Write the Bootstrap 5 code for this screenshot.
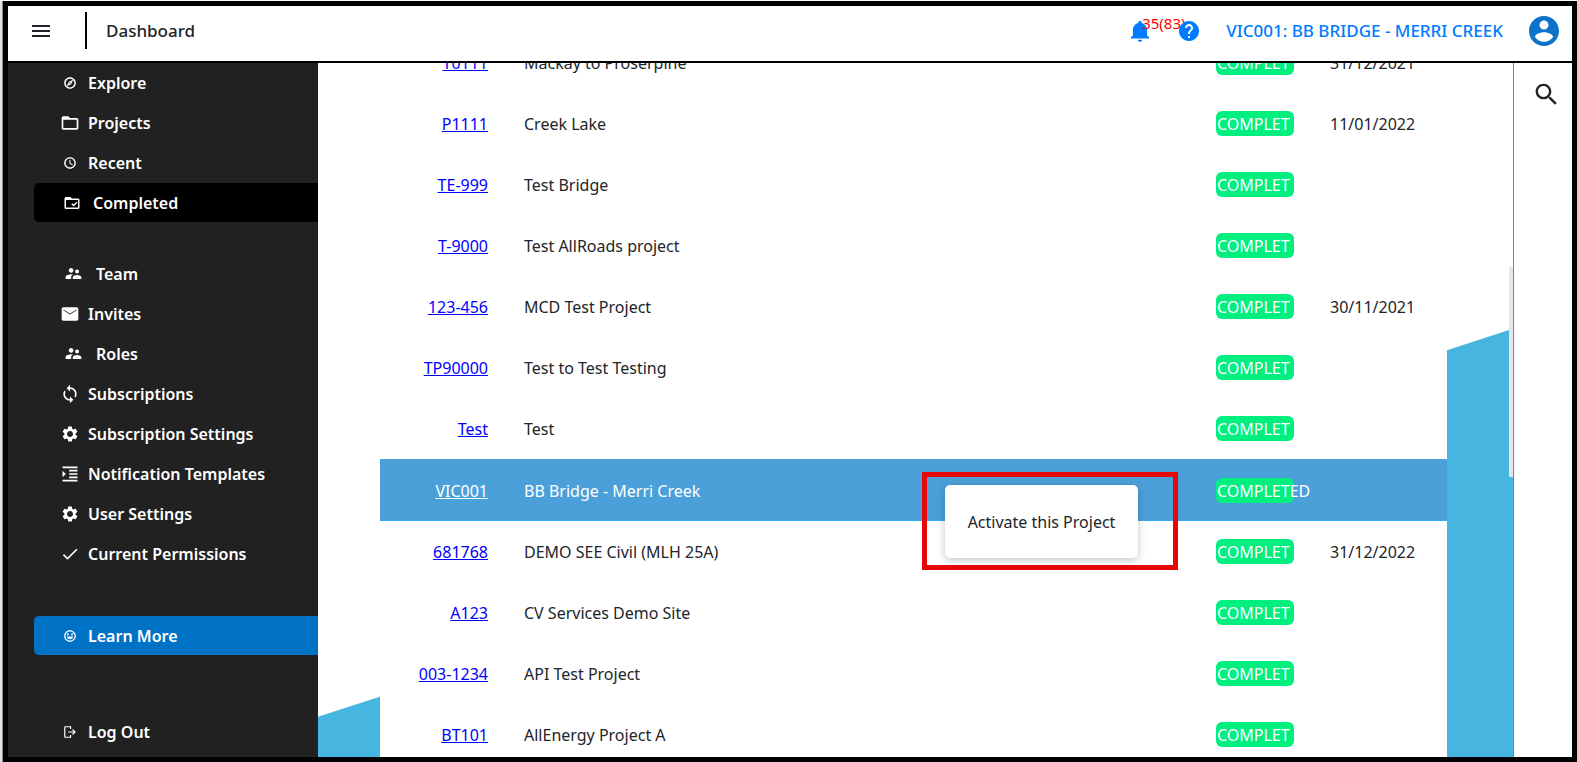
<!DOCTYPE html>
<html lang="en">
<head>
<meta charset="utf-8">
<meta name="viewport" content="width=device-width, initial-scale=1">
<title>Dashboard</title>
<link href="https://cdn.jsdelivr.net/npm/bootstrap@5.3.0/dist/css/bootstrap.min.css" rel="stylesheet">
<style>
  body { font-family: "Noto Sans", "Open Sans", sans-serif; font-size: 16px; line-height: 24px; color: #212529; background: #dfe2e4; }
  svg { fill: currentColor; display: block; flex: none; }
  .window-edge { padding: 1px 0 0 2px; background: linear-gradient(#fff, #fff) top / 100% 1px no-repeat #dfe2e4; }
  .app-frame { border: 5px solid #000; box-shadow: -1px 0 #8a8a8a; margin-left: 1px; background: #fff; min-width: 0; }
  .topbar { height: 57px; border-bottom: 2px solid #000; padding: 0 10px 6px 21px; }
  .plain-btn { border: 0; background: none; padding: 0; color: inherit; }
  .divider { width: 2px; height: 37px; background: #000; margin: 0 19px 0 32px; }
  .page-title { font-size: 17px; font-weight: 500; margin: 0; line-height: 24px; }
  .blue { color: #007bff; }
  .alerts { width: 50px; }
  .alert-count { left: 15px; top: -5px; font-size: 15px; line-height: 20px; color: #f00; }
  .project-name { font-size: 17px; font-weight: 500; margin: 0 23px 0 25px; text-decoration: none; }
  .avatar { color: #0b74c8; }

  .side { width: 310px; background: #212121; padding-left: 26px; }
  .side a { height: 39px; margin-bottom: 1px; padding-left: 26px; color: #fff; font-weight: 600; text-decoration: none; border-radius: 5px 0 0 5px; }
  .side .ico { width: 20px; margin-right: 8px; display: flex; justify-content: center; }
  .side .ico-wide { width: 24px; margin-right: 9px; }
  .side .ico-team { width: 26px; margin-right: 10px; }
  .side .current { background: #000; }
  .side .learn { background: #0072c6; }
  .group-account { margin-top: 32px; }
  .group-learn { margin-top: 43px; }
  .group-exit { margin-top: 57px; }

  .stage { min-width: 0; padding: 0 66px 0 62px; }
  .stage::before { content: ""; position: absolute; inset: 0; background: #46b5df; clip-path: polygon(0 94.2%, 100% 38.3%, 100% 100%, 0 100%); }
  .scroll-thumb { right: 0; top: 204px; width: 4px; height: 210px; background: #e6e6e6; }
  .sheet { background: #fff; margin-top: -31px; }
  .projects { table-layout: fixed; width: 100%; border-collapse: separate; border-spacing: 0; }
  .projects td { height: 61px; padding: 1px 0 0; vertical-align: middle; white-space: nowrap; }
  .projects td:nth-child(3) { padding-top: 0; }
  .col-id { width: 144px; }
  .col-state { width: 114px; }
  .col-due { width: 117px; }
  .projects td:first-child { text-align: right; padding-right: 36px; }
  .projects a { color: #00f; text-decoration: underline; }
  .state { display: block; width: 78px; height: 25px; border-radius: 6px; background: #00ef7f; color: #fff; padding-left: 1px; line-height: 27px; }
  .projects .picked td { background: #4ba0da; color: #fff; height: 62px; border-top: 1px solid #45a5e5; border-bottom: 0; box-shadow: inset 0 -1px #35aaf5; }
  .projects .picked a { color: #fff; }
  .callout-box { right: 38px; top: 12px; width: 256px; height: 98px; border: 5px solid #ea0606; padding: 8px 0 0 18px; z-index: 2; }
  .menu-btn { width: 193px; height: 73px; border: 0; border-radius: 5px; background: #fff; color: #212529; box-shadow: 0 2px 8px rgba(0,0,0,.24); }
  .tools { width: 59px; border-left: 1px solid #808080; padding: 17px 0 0 18px; background: #fff; }
</style>
</head>
<body>
<svg class="d-none">
  <symbol id="gear" viewBox="0 0 24 24"><path fill-rule="evenodd" d="M19.430 12.980c.04-.32.070-.64.070-.98s-.03-.66-.07-.98l2.110-1.650c.19-.15.240-.42.120-.64l-2-3.460c-.12-.22-.39-.3-.61-.22l-2.490 1c-.52-.4-1.080-.73-1.690-.98l-.38-2.650C14.460 2.180 14.250 2 14 2h-4c-.25 0-.46.180-.49.420l-.38 2.650c-.61.250-1.170.59-1.690.98l-2.490-1c-.23-.09-.49 0-.61.220l-2 3.460c-.13.220-.07.490.12.640l2.110 1.650c-.04.320-.07.650-.07.980s.03.660.07.980l-2.110 1.650c-.19.150-.24.420-.12.640l2 3.460c.12.220.39.300.61.220l2.490-1c.52.400 1.080.730 1.690.980l.38 2.650c.03.240.24.420.49.420h4c.25 0 .46-.18.490-.42l.38-2.650c.61-.25 1.170-.59 1.690-.98l2.490 1c.23.090.49 0 .61-.22l2-3.460c.12-.22.070-.49-.12-.64l-2.110-1.650zM12 16c-2.210 0-4-1.790-4-4s1.790-4 4-4 4 1.790 4 4-1.790 4-4 4z"/></symbol>
  <symbol id="people" viewBox="0 0 24 24"><path d="M16.500 12c1.380 0 2.490-1.120 2.490-2.500S17.880 7 16.500 7 14 8.120 14 9.500s1.120 2.500 2.500 2.500zM9 11c1.660 0 2.990-1.340 2.990-3S10.660 5 9 5 6 6.340 6 8s1.340 3 3 3zm7.500 3c-1.830 0-5.500.92-5.500 2.750V19h11v-2.250c0-1.830-3.670-2.750-5.500-2.750zM9 13c-2.330 0-7 1.170-7 3.500V19h7v-2.250c0-.85.33-2.340 2.370-3.470C10.500 13.100 9.660 13 9 13z"/></symbol>
</svg>
<div class="window-edge vh-100 d-flex">
<div class="app-frame flex-grow-1 d-flex flex-column overflow-hidden">
  <header class="topbar d-flex align-items-center flex-shrink-0">
    <button class="plain-btn" aria-label="Menu"><svg width="24" height="24" viewBox="0 0 24 24"><path d="M3 18h18v-2H3v2zm0-5h18v-2H3v2zm0-7v2h18V6H3z"/></svg></button>
    <span class="divider"></span>
    <h1 class="page-title">Dashboard</h1>
    <div class="ms-auto d-flex align-items-center blue">
      <button class="plain-btn alerts position-relative" aria-label="Notifications"><svg width="26" height="26" viewBox="0 0 24 24"><path d="M12 22c1.1 0 2-.9 2-2h-4c0 1.100.9 2 2 2zm6.500-6v-5c0-3.070-2.140-5.640-5-6.320V4c0-.83-.67-1.500-1.500-1.500s-1.500.67-1.500 1.500v.68C7.630 5.360 5.500 7.920 5.500 11v5l-2 2v1h17v-1l-2-2z"/></svg><span class="alert-count position-absolute">35(83)</span></button>
      <button class="plain-btn position-relative" aria-label="Help"><svg width="24" height="24" viewBox="0 0 24 24"><path d="M12 2C6.480 2 2 6.480 2 12s4.480 10 10 10 10-4.480 10-10S17.520 2 12 2zm1 17h-2v-2h2v2zm2.070-7.750l-.9.920C13.450 12.900 13 13.500 13 15h-2v-.5c0-1.100.45-2.100 1.170-2.830l1.240-1.260c.37-.36.590-.86.590-1.410 0-1.100-.9-2-2-2s-2 .9-2 2H8c0-2.210 1.790-4 4-4s4 1.790 4 4c0 .88-.36 1.680-.93 2.250z"/></svg></button>
      <a href="#" class="project-name blue">VIC001: BB BRIDGE - MERRI CREEK</a>
      <button class="plain-btn avatar" aria-label="Account"><svg width="36" height="36" viewBox="0 0 24 24"><path d="M12 2C6.480 2 2 6.480 2 12s4.480 10 10 10 10-4.480 10-10S17.520 2 12 2zm0 3c1.660 0 3 1.340 3 3s-1.340 3-3 3-3-1.340-3-3 1.340-3 3-3zm0 14.200c-2.500 0-4.710-1.280-6-3.220.03-1.990 4-3.080 6-3.080 1.990 0 5.970 1.090 6 3.080-1.290 1.940-3.500 3.220-6 3.220z"/></svg></button>
    </div>
  </header>

  <div class="d-flex flex-grow-1 overflow-hidden">
    <nav class="side flex-shrink-0 overflow-hidden">
      <div>
        <a href="#" class="d-flex align-items-center"><span class="ico"><svg width="14" height="14" viewBox="0 0 24 24"><path d="M12 2C6.480 2 2 6.480 2 12s4.480 10 10 10 10-4.480 10-10S17.520 2 12 2zm0 17.500c-4.140 0-7.500-3.360-7.500-7.500S7.860 4.500 12 4.500s7.500 3.360 7.500 7.500-3.360 7.500-7.500 7.500zM6.500 17.500l7.510-3.490L17.500 6.500 9.990 9.990 6.500 17.500zm5.500-6.600c.61 0 1.100.49 1.100 1.100s-.49 1.100-1.100 1.100-1.100-.49-1.100-1.100.49-1.100 1.100-1.100z"/></svg></span>Explore</a>
        <a href="#" class="d-flex align-items-center"><span class="ico"><svg width="20" height="20" viewBox="0 0 24 24"><path d="M20 6h-8l-2-2H4c-1.100 0-1.990.9-1.990 2L2 18c0 1.100.9 2 2 2h16c1.100 0 2-.9 2-2V8c0-1.100-.9-2-2-2zm0 12H4V8h16v10z"/></svg></span>Projects</a>
        <a href="#" class="d-flex align-items-center"><span class="ico"><svg width="14" height="14" viewBox="0 0 24 24"><path d="M12 2C6.500 2 2 6.500 2 12s4.500 10 10 10 10-4.500 10-10S17.500 2 12 2zm0 17.600c-4.200 0-7.600-3.400-7.600-7.600S7.800 4.400 12 4.400s7.600 3.400 7.600 7.600-3.400 7.600-7.600 7.600zM12.700 7H11v6l5 3 .9-1.400-4.200-2.500z"/></svg></span>Recent</a>
        <a href="#" class="d-flex align-items-center current"><span class="ico ico-wide"><svg width="18" height="18" viewBox="0 0 24 24"><path fill-rule="evenodd" d="M20 6h-8l-2-2H4c-1.100 0-2 .9-2 2v12c0 1.100.9 2 2 2h16c1.100 0 2-.9 2-2V8c0-1.100-.9-2-2-2zm0 12H4V8h16v10zM11 13.500l1.300-1.300 1.900 1.900 3.700-3.800 1.300 1.300-5 5z"/></svg></span>Completed</a>
      </div>
      <div class="group-account">
        <a href="#" class="d-flex align-items-center"><span class="ico ico-team"><svg width="19" height="19"><use href="#people"/></svg></span>Team</a>
        <a href="#" class="d-flex align-items-center"><span class="ico"><svg width="20" height="20" viewBox="0 0 24 24"><path d="M20 4H4c-1.100 0-2 .9-2 2v12c0 1.100.9 2 2 2h16c1.100 0 2-.9 2-2V6c0-1.100-.9-2-2-2zm0 3.500l-8 5-8-5V6.500l8 5 8-5V7.500z"/></svg></span>Invites</a>
        <a href="#" class="d-flex align-items-center"><span class="ico ico-team"><svg width="19" height="19"><use href="#people"/></svg></span>Roles</a>
        <a href="#" class="d-flex align-items-center"><span class="ico"><svg width="20" height="20" viewBox="0 0 24 24"><path d="M12 4V1L8 5l4 4V6c3.310 0 6 2.690 6 6 0 1.010-.25 1.970-.7 2.800l1.460 1.460C19.540 15.030 20 13.570 20 12c0-4.420-3.580-8-8-8zm0 14c-3.310 0-6-2.690-6-6 0-1.010.25-1.970.7-2.800L5.240 7.740C4.460 8.970 4 10.430 4 12c0 4.420 3.580 8 8 8v3l4-4-4-4v3z"/></svg></span>Subscriptions</a>
        <a href="#" class="d-flex align-items-center"><span class="ico"><svg width="18" height="18"><use href="#gear"/></svg></span>Subscription Settings</a>
        <a href="#" class="d-flex align-items-center"><span class="ico"><svg width="20" height="20" viewBox="0 0 24 24"><path d="M3 21h18v-2H3v2zM3 8v8l4-4-4-4zm8 9h10v-2H11v2zM3 3v2h18V3H3zm8 6h10V7H11v2zm0 4h10v-2H11v2z"/></svg></span>Notification Templates</a>
        <a href="#" class="d-flex align-items-center"><span class="ico"><svg width="18" height="18"><use href="#gear"/></svg></span>User Settings</a>
        <a href="#" class="d-flex align-items-center"><span class="ico"><svg width="20" height="20" viewBox="0 0 24 24"><path d="M9 16.170L4.830 12l-1.420 1.410L9 19 21 7l-1.410-1.410z"/></svg></span>Current Permissions</a>
      </div>
      <div class="group-learn">
        <a href="#" class="d-flex align-items-center learn"><span class="ico"><svg width="14" height="14" viewBox="0 0 24 24"><path d="M12 2C6.500 2 2 6.500 2 12s4.500 10 10 10 10-4.500 10-10S17.500 2 12 2zm0 17.800c-4.300 0-7.800-3.500-7.800-7.800S7.700 4.200 12 4.200s7.800 3.500 7.800 7.800-3.500 7.800-7.800 7.800zM7 7.500h3v3H7zm7 0h3v3h-3zM6.500 13h11c-.5 2.700-2.700 4.700-5.500 4.700S7 15.700 6.500 13z"/></svg></span>Learn More</a>
      </div>
      <div class="group-exit">
        <a href="#" class="d-flex align-items-center"><span class="ico"><svg width="14" height="14" viewBox="0 0 24 24"><path d="M17 7l-1.400 1.400 2.600 2.600H9v2h9.200l-2.600 2.600L17 17l5-5zM4 4h9V2H4c-1.100 0-2 .9-2 2v16c0 1.100.9 2 2 2h9v-2H4z"/><path d="M12 2h2v5h-2zM12 17h2v5h-2z"/></svg></span>Log Out</a>
      </div>
    </nav>

    <main class="stage flex-grow-1 position-relative overflow-hidden">
      <div class="sheet position-relative">
        <table class="projects">
          <colgroup><col class="col-id"><col><col class="col-state"><col class="col-due"></colgroup>
          <tbody>
            <tr><td><a href="#">T0111</a></td><td>Mackay to Proserpine</td><td><span class="state">COMPLET</span></td><td>31/12/2021</td></tr>
            <tr><td><a href="#">P1111</a></td><td>Creek Lake</td><td><span class="state">COMPLET</span></td><td>11/01/2022</td></tr>
            <tr><td><a href="#">TE-999</a></td><td>Test Bridge</td><td><span class="state">COMPLET</span></td><td></td></tr>
            <tr><td><a href="#">T-9000</a></td><td>Test AllRoads project</td><td><span class="state">COMPLET</span></td><td></td></tr>
            <tr><td><a href="#">123-456</a></td><td>MCD Test Project</td><td><span class="state">COMPLET</span></td><td>30/11/2021</td></tr>
            <tr><td><a href="#">TP90000</a></td><td>Test to Test Testing</td><td><span class="state">COMPLET</span></td><td></td></tr>
            <tr><td><a href="#">Test</a></td><td>Test</td><td><span class="state">COMPLET</span></td><td></td></tr>
            <tr class="picked"><td><a href="#">VIC001</a></td><td class="position-relative">BB Bridge - Merri Creek
              <div class="callout-box position-absolute"><button class="menu-btn">Activate this Project</button></div></td><td><span class="state">COMPLETED</span></td><td></td></tr>
            <tr><td><a href="#">681768</a></td><td>DEMO SEE Civil (MLH 25A)</td><td><span class="state">COMPLET</span></td><td>31/12/2022</td></tr>
            <tr><td><a href="#">A123</a></td><td>CV Services Demo Site</td><td><span class="state">COMPLET</span></td><td></td></tr>
            <tr><td><a href="#">003-1234</a></td><td>API Test Project</td><td><span class="state">COMPLET</span></td><td></td></tr>
            <tr><td><a href="#">BT101</a></td><td>AllEnergy Project A</td><td><span class="state">COMPLET</span></td><td></td></tr>
          </tbody>
        </table>
      </div>
      <span class="scroll-thumb position-absolute"></span>
    </main>

    <aside class="tools flex-shrink-0">
      <button class="plain-btn" aria-label="Search"><svg width="29" height="29" viewBox="0 0 24 24"><path d="M15.500 14h-.79l-.28-.27C15.410 12.590 16 11.110 16 9.500 16 5.910 13.090 3 9.500 3S3 5.910 3 9.500 5.910 16 9.500 16c1.610 0 3.090-.59 4.230-1.570l.27.280v.79l5 4.990L20.490 19l-4.990-5zm-6 0C7.010 14 5 11.990 5 9.500S7.010 5 9.500 5 14 7.010 14 9.500 11.990 14 9.500 14z"/></svg></button>
    </aside>
  </div>
</div>
</div>
<script src="https://cdn.jsdelivr.net/npm/bootstrap@5.3.0/dist/js/bootstrap.bundle.min.js"></script>
</body>
</html>
